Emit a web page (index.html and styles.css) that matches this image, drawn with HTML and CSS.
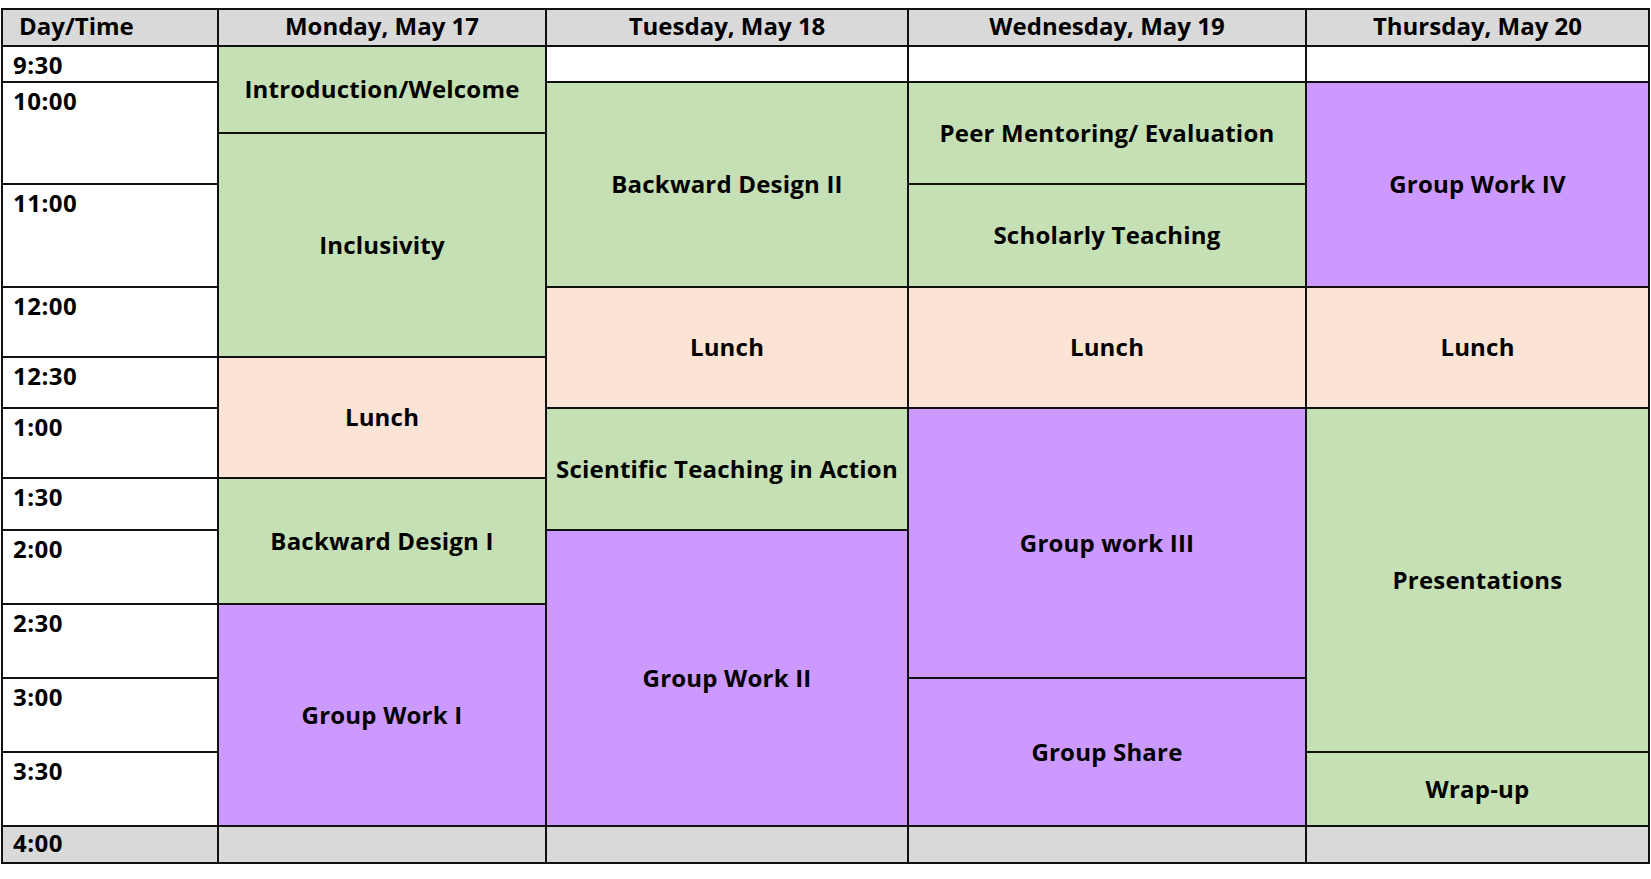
FILE: index.html
```
<!DOCTYPE html>
<html lang="en">
<head>
<meta charset="utf-8">
<title>Workshop Schedule</title>
<link rel="stylesheet" href="styles.css">
</head>
<body>
<div class="schedule">
  <div class="cell head first">Day/Time</div>
  <div class="cell time">9:30</div>
  <div class="cell time span2">10:00</div>
  <div class="cell time">11:00</div>
  <div class="cell time">12:00</div>
  <div class="cell time">12:30</div>
  <div class="cell time">1:00</div>
  <div class="cell time">1:30</div>
  <div class="cell time">2:00</div>
  <div class="cell time">2:30</div>
  <div class="cell time">3:00</div>
  <div class="cell time">3:30</div>
  <div class="cell time foot">4:00</div>

  <div class="cell head">Monday, May 17</div>
  <div class="cell ev green span2">Introduction/Welcome</div>
  <div class="cell ev green span3">Inclusivity</div>
  <div class="cell ev peach span2">Lunch</div>
  <div class="cell ev green span2">Backward Design I</div>
  <div class="cell ev purple span3">Group Work I</div>
  <div class="cell foot"></div>

  <div class="cell head">Tuesday, May 18</div>
  <div class="cell blank"></div>
  <div class="cell ev green span3">Backward Design II</div>
  <div class="cell ev peach span2">Lunch</div>
  <div class="cell ev green span2">Scientific Teaching in Action</div>
  <div class="cell ev purple span4">Group Work II</div>
  <div class="cell foot"></div>

  <div class="cell head">Wednesday, May 19</div>
  <div class="cell blank"></div>
  <div class="cell ev green span2">Peer Mentoring/ Evaluation</div>
  <div class="cell ev green">Scholarly Teaching</div>
  <div class="cell ev peach span2">Lunch</div>
  <div class="cell ev purple span4">Group work III</div>
  <div class="cell ev purple span2">Group Share</div>
  <div class="cell foot"></div>

  <div class="cell head">Thursday, May 20</div>
  <div class="cell blank"></div>
  <div class="cell ev purple span3">Group Work IV</div>
  <div class="cell ev peach span2">Lunch</div>
  <div class="cell ev green span5">Presentations</div>
  <div class="cell ev green">Wrap-up</div>
  <div class="cell foot"></div>
</div>
</body>
</html>
```
FILE: styles.css
```
html, body {
  margin: 0;
  padding: 0;
  background: #ffffff;
}

body {
  padding: 8px 0 0 1px;
  font-family: "Open Sans", Lato, "Liberation Sans", sans-serif;
  font-weight: 700;
  font-size: 24px;
  color: #000000;
}

.schedule {
  display: grid;
  grid-auto-flow: column;
  grid-template-columns: 214px 326px 360px 396px 341px;
  grid-template-rows: 35px 34px 49px 49px 101px 68px 49px 68px 50px 72px 72px 72px 72px 35px;
  gap: 2px;
  padding: 2px;
  background: #111111;
  width: max-content;
}

.cell {
  background: #ffffff;
  line-height: 1.2;
  white-space: nowrap;
}

.head {
  background: #d9d9d9;
  display: flex;
  align-items: center;
  justify-content: center;
  padding-bottom: 3px;
}

.head.first {
  justify-content: flex-start;
  padding-left: 16px;
}

.time {
  padding: 4px 0 0 10px;
  letter-spacing: 0.5px;
}

.foot {
  background: #d9d9d9;
}

.time.foot {
  padding-top: 2px;
}

.ev {
  display: flex;
  align-items: center;
  justify-content: center;
  text-align: center;
  letter-spacing: 0.2px;
}

.green { background: #c5e0b4; }
.peach { background: #fbe3d6; }
.purple { background: #cc99ff; }

.span2 { grid-row: span 2; }
.span3 { grid-row: span 3; }
.span4 { grid-row: span 4; }
.span5 { grid-row: span 5; }
```
